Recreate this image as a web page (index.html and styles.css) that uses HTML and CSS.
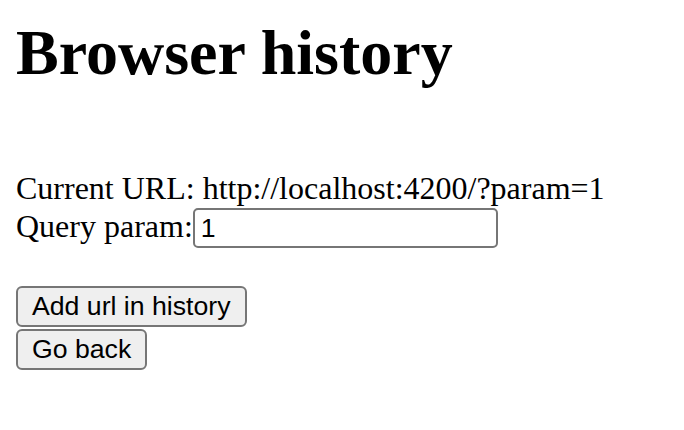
FILE: index.html
```html
<!DOCTYPE html>
<html>
<head>
<meta charset="utf-8">
<link rel="stylesheet" href="styles.css">
</head>
<body>
<div class="page">
  <h1 class="title">Browser history</h1>
  <div class="info">
    <div class="line">Current URL: http://localhost:4200/?param=1</div>
    <div class="line query">Query param:<input class="field" type="text" value="1"></div>
  </div>
  <div class="actions">
    <button class="btn" type="button">Add url in history</button>
    <button class="btn" type="button">Go back</button>
  </div>
</div>
</body>
</html>
```

FILE: styles.css
```css
html, body {
  margin: 0;
  padding: 0;
  background: #fff;
}
.page {
  padding: 16px;
  font-family: "Liberation Serif", "Times New Roman", serif;
  font-size: 32px;
  color: #000;
}
.title {
  margin: 0;
  font-size: 64px;
  font-weight: bold;
  line-height: 73.6px;
}
.info {
  margin-top: 80px;
}
.line {
  line-height: 36.8px;
}
.query {
  display: flex;
  align-items: baseline;
  height: 43px;
}
.field {
  box-sizing: border-box;
  width: 305px;
  height: 40px;
  margin: 2px 0 0 0;
  padding: 2px 6px;
  border: 2px solid #767676;
  border-radius: 5px;
  font-family: "Liberation Sans", Arial, sans-serif;
  font-size: 26.67px;
  color: #000;
  background: #fff;
  outline: none;
}
.actions {
  margin-top: 37px;
  display: flex;
  flex-direction: column;
  align-items: flex-start;
  gap: 2px;
}
.btn {
  box-sizing: border-box;
  height: 41px;
  padding: 2px 14px;
  border: 2px solid #767676;
  border-radius: 6px;
  background: #efefef;
  font-family: "Liberation Sans", Arial, sans-serif;
  font-size: 26.67px;
  color: #000;
  line-height: normal;
}
```
